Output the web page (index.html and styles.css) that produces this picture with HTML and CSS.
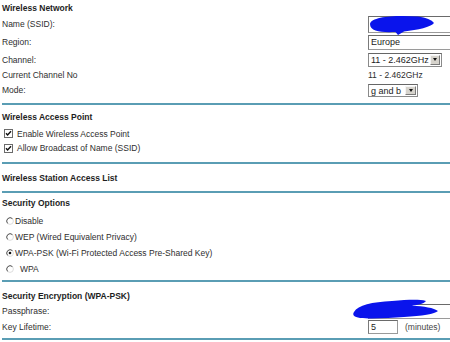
FILE: index.html
```html
<!DOCTYPE html>
<html>
<head>
<meta charset="utf-8">
<title>Wireless Settings</title>
<link rel="stylesheet" href="styles.css">
</head>
<body>
<div class="page">
  <section class="sec sec-net">
    <div class="row hdr h15">Wireless Network</div>
    <div class="row h18">
      <span class="lbl">Name (SSID):</span>
      <span class="ctl">
        <span class="field f-ssid"></span>
        <svg class="scribble sc-ssid" width="70" height="22" viewBox="0 0 70 22">
          <path d="M2 9 C 3 1, 30 0, 50 1.5 C 58 2.5, 64 5, 66 8 C 63 12, 50 15, 36 16.5 L 30 20 L 27.5 17 C 14 17.5, 2 17, 2 9 Z" fill="#0a14ec"/>
        </svg>
      </span>
    </div>
    <div class="row h18">
      <span class="lbl">Region:</span>
      <span class="ctl"><span class="field f-region">Europe</span></span>
    </div>
    <div class="row h17">
      <span class="lbl">Channel:</span>
      <span class="ctl"><span class="select s-chan"><span class="sval">11 - 2.462GHz</span><span class="sbtn"><i class="tri"></i></span></span></span>
    </div>
    <div class="row h13">
      <span class="lbl">Current Channel No</span>
      <span class="ctl">11 - 2.462GHz</span>
    </div>
    <div class="row h18">
      <span class="lbl">Mode:</span>
      <span class="ctl"><span class="select s-mode"><span class="sval">g and b</span><span class="sbtn"><i class="tri"></i></span></span></span>
    </div>
  </section>

  <section class="sec sec-ap">
    <div class="row hdr h20">Wireless Access Point</div>
    <div class="row h13 opt">
      <svg class="cb" width="9" height="9" viewBox="0 0 9 9"><rect x="0.5" y="0.5" width="8" height="8" fill="#fff" stroke="#6b6b6b"/><path d="M2 4.2 L3.6 6 L7 2.2" fill="none" stroke="#111" stroke-width="1.4"/></svg>
      <span class="otxt t-cb">Enable Wireless Access Point</span>
    </div>
    <div class="row h16 opt">
      <svg class="cb" width="9" height="9" viewBox="0 0 9 9"><rect x="0.5" y="0.5" width="8" height="8" fill="#fff" stroke="#6b6b6b"/><path d="M2 4.2 L3.6 6 L7 2.2" fill="none" stroke="#111" stroke-width="1.4"/></svg>
      <span class="otxt t-cb">Allow Broadcast of Name (SSID)</span>
    </div>
  </section>

  <section class="sec sec-list">
    <div class="row hdr h27">Wireless Station Access List</div>
  </section>

  <section class="sec sec-sec">
    <div class="row hdr h20">Security Options</div>
    <div class="row h16 opt">
      <svg class="rb" width="8" height="8" viewBox="0 0 8 8"><circle cx="4" cy="4" r="3.4" fill="#fff" stroke="#ddd"/><path d="M6.4 1.6 A3.4 3.4 0 0 0 1.6 6.4" fill="none" stroke="#5a5a5a"/></svg>
      <span class="otxt">Disable</span>
    </div>
    <div class="row h16 opt">
      <svg class="rb" width="8" height="8" viewBox="0 0 8 8"><circle cx="4" cy="4" r="3.4" fill="#fff" stroke="#ddd"/><path d="M6.4 1.6 A3.4 3.4 0 0 0 1.6 6.4" fill="none" stroke="#5a5a5a"/></svg>
      <span class="otxt">WEP (Wired Equivalent Privacy)</span>
    </div>
    <div class="row h16 opt">
      <svg class="rb" width="8" height="8" viewBox="0 0 8 8"><circle cx="4" cy="4" r="3.4" fill="#fff" stroke="#ddd"/><path d="M6.4 1.6 A3.4 3.4 0 0 0 1.6 6.4" fill="none" stroke="#5a5a5a"/><circle cx="4" cy="4" r="1.3" fill="#111"/></svg>
      <span class="otxt">WPA-PSK (Wi-Fi Protected Access Pre-Shared Key)</span>
    </div>
    <div class="row h16 opt">
      <svg class="rb" width="8" height="8" viewBox="0 0 8 8"><circle cx="4" cy="4" r="3.4" fill="#fff" stroke="#ddd"/><path d="M6.4 1.6 A3.4 3.4 0 0 0 1.6 6.4" fill="none" stroke="#5a5a5a"/></svg>
      <span class="otxt t-wpa">WPA</span>
    </div>
  </section>

  <section class="sec sec-enc">
    <div class="row hdr h16">Security Encryption (WPA-PSK)</div>
    <div class="row h14">
      <span class="lbl">Passphrase:</span>
      <span class="ctl">
        <span class="field f-pass"></span>
        <svg class="scribble sc-pass" width="90" height="24" viewBox="0 0 90 24">
          <path d="M2 15 C 6 8, 20 5, 40 4 C 55 3, 66 2, 74 4 C 72 7, 64 8, 60 9 C 72 9, 82 11, 86 14 C 83 17, 70 19, 52 20 C 38 21, 20 22, 8 21 C 2 20, 0 18, 2 15 Z" fill="#0a14ec"/>
        </svg>
      </span>
    </div>
    <div class="row h18">
      <span class="lbl">Key Lifetime:</span>
      <span class="ctl"><span class="field f-life">5</span><span class="unit">(minutes)</span></span>
    </div>
  </section>
</div>
</body>
</html>
```

FILE: styles.css
```css
html, body {
  margin: 0;
  padding: 0;
  background: #fff;
}
body {
  font-family: "Liberation Sans", Arial, sans-serif;
  font-size: 8.5px;
  color: #2e2e2e;
  width: 450px;
  height: 342px;
  overflow: hidden;
}
.page {
  padding-left: 2px;
  width: 448px;
}
.sec {
  border-bottom: 2px solid #5a9db4;
}
.sec-net { padding-bottom: 4px; }
.sec-ap { padding-top: 2px; padding-bottom: 6px; }
.sec-sec { padding-bottom: 3px; }
.sec-enc { padding-top: 6px; padding-bottom: 2px; }

.row {
  display: flex;
  align-items: center;
  white-space: nowrap;
}
.h13 { height: 13px; }
.h14 { height: 14px; }
.h15 { height: 15px; }
.h16 { height: 16px; }
.h17 { height: 17px; }
.h18 { height: 18px; }
.h20 { height: 20px; }
.h27 { height: 27px; }

.hdr {
  font-weight: bold;
  color: #1e1e1e;
}
.lbl {
  flex: 0 0 366px;
}
.ctl {
  position: relative;
  display: flex;
  align-items: center;
  flex: 1;
}

.field {
  box-sizing: border-box;
  display: inline-block;
  height: 15px;
  line-height: 13px;
  padding-left: 2px;
  border: 1px solid #9a9a9a;
  border-top-color: #6a6a6a;
  border-left-color: #7a7a7a;
  background: #fff;
  font-size: 9px;
  color: #222;
}
.f-ssid { width: 90px; height: 17px; }
.f-region { width: 90px; }
.f-pass { width: 90px; height: 15px; }
.f-life { width: 30px; height: 14px; line-height: 12px; }
.unit {
  margin-left: 7px;
  color: #444;
}

.select {
  box-sizing: border-box;
  display: inline-flex;
  align-items: stretch;
  height: 14px;
  border: 1px solid #8a8a8a;
  border-top-color: #666;
  background: #fff;
  font-size: 9px;
  color: #222;
}
.s-chan { width: 74px; }
.s-mode { width: 50px; height: 13px; }
.sval {
  flex: 1;
  padding-left: 2px;
  line-height: 12px;
}
.sbtn {
  width: 9px;
  margin: 1px;
  background: #d6d3cc;
  border: 1px solid #f4f4f4;
  border-right-color: #7a7a7a;
  border-bottom-color: #7a7a7a;
  display: flex;
  align-items: center;
  justify-content: center;
}
.tri {
  width: 0;
  height: 0;
  border-left: 2.5px solid transparent;
  border-right: 2.5px solid transparent;
  border-top: 3px solid #111;
}

.opt .cb { margin-left: 2px; flex: none; }
.opt .rb { margin-left: 4px; flex: none; }
.otxt { margin-left: 1px; }
.t-cb { margin-left: 4px; }
.t-wpa { margin-left: 6px; }

.scribble {
  position: absolute;
  pointer-events: none;
}
.sc-ssid { left: 0; top: -1px; }
.sc-pass { left: -16px; top: -7px; }
```
